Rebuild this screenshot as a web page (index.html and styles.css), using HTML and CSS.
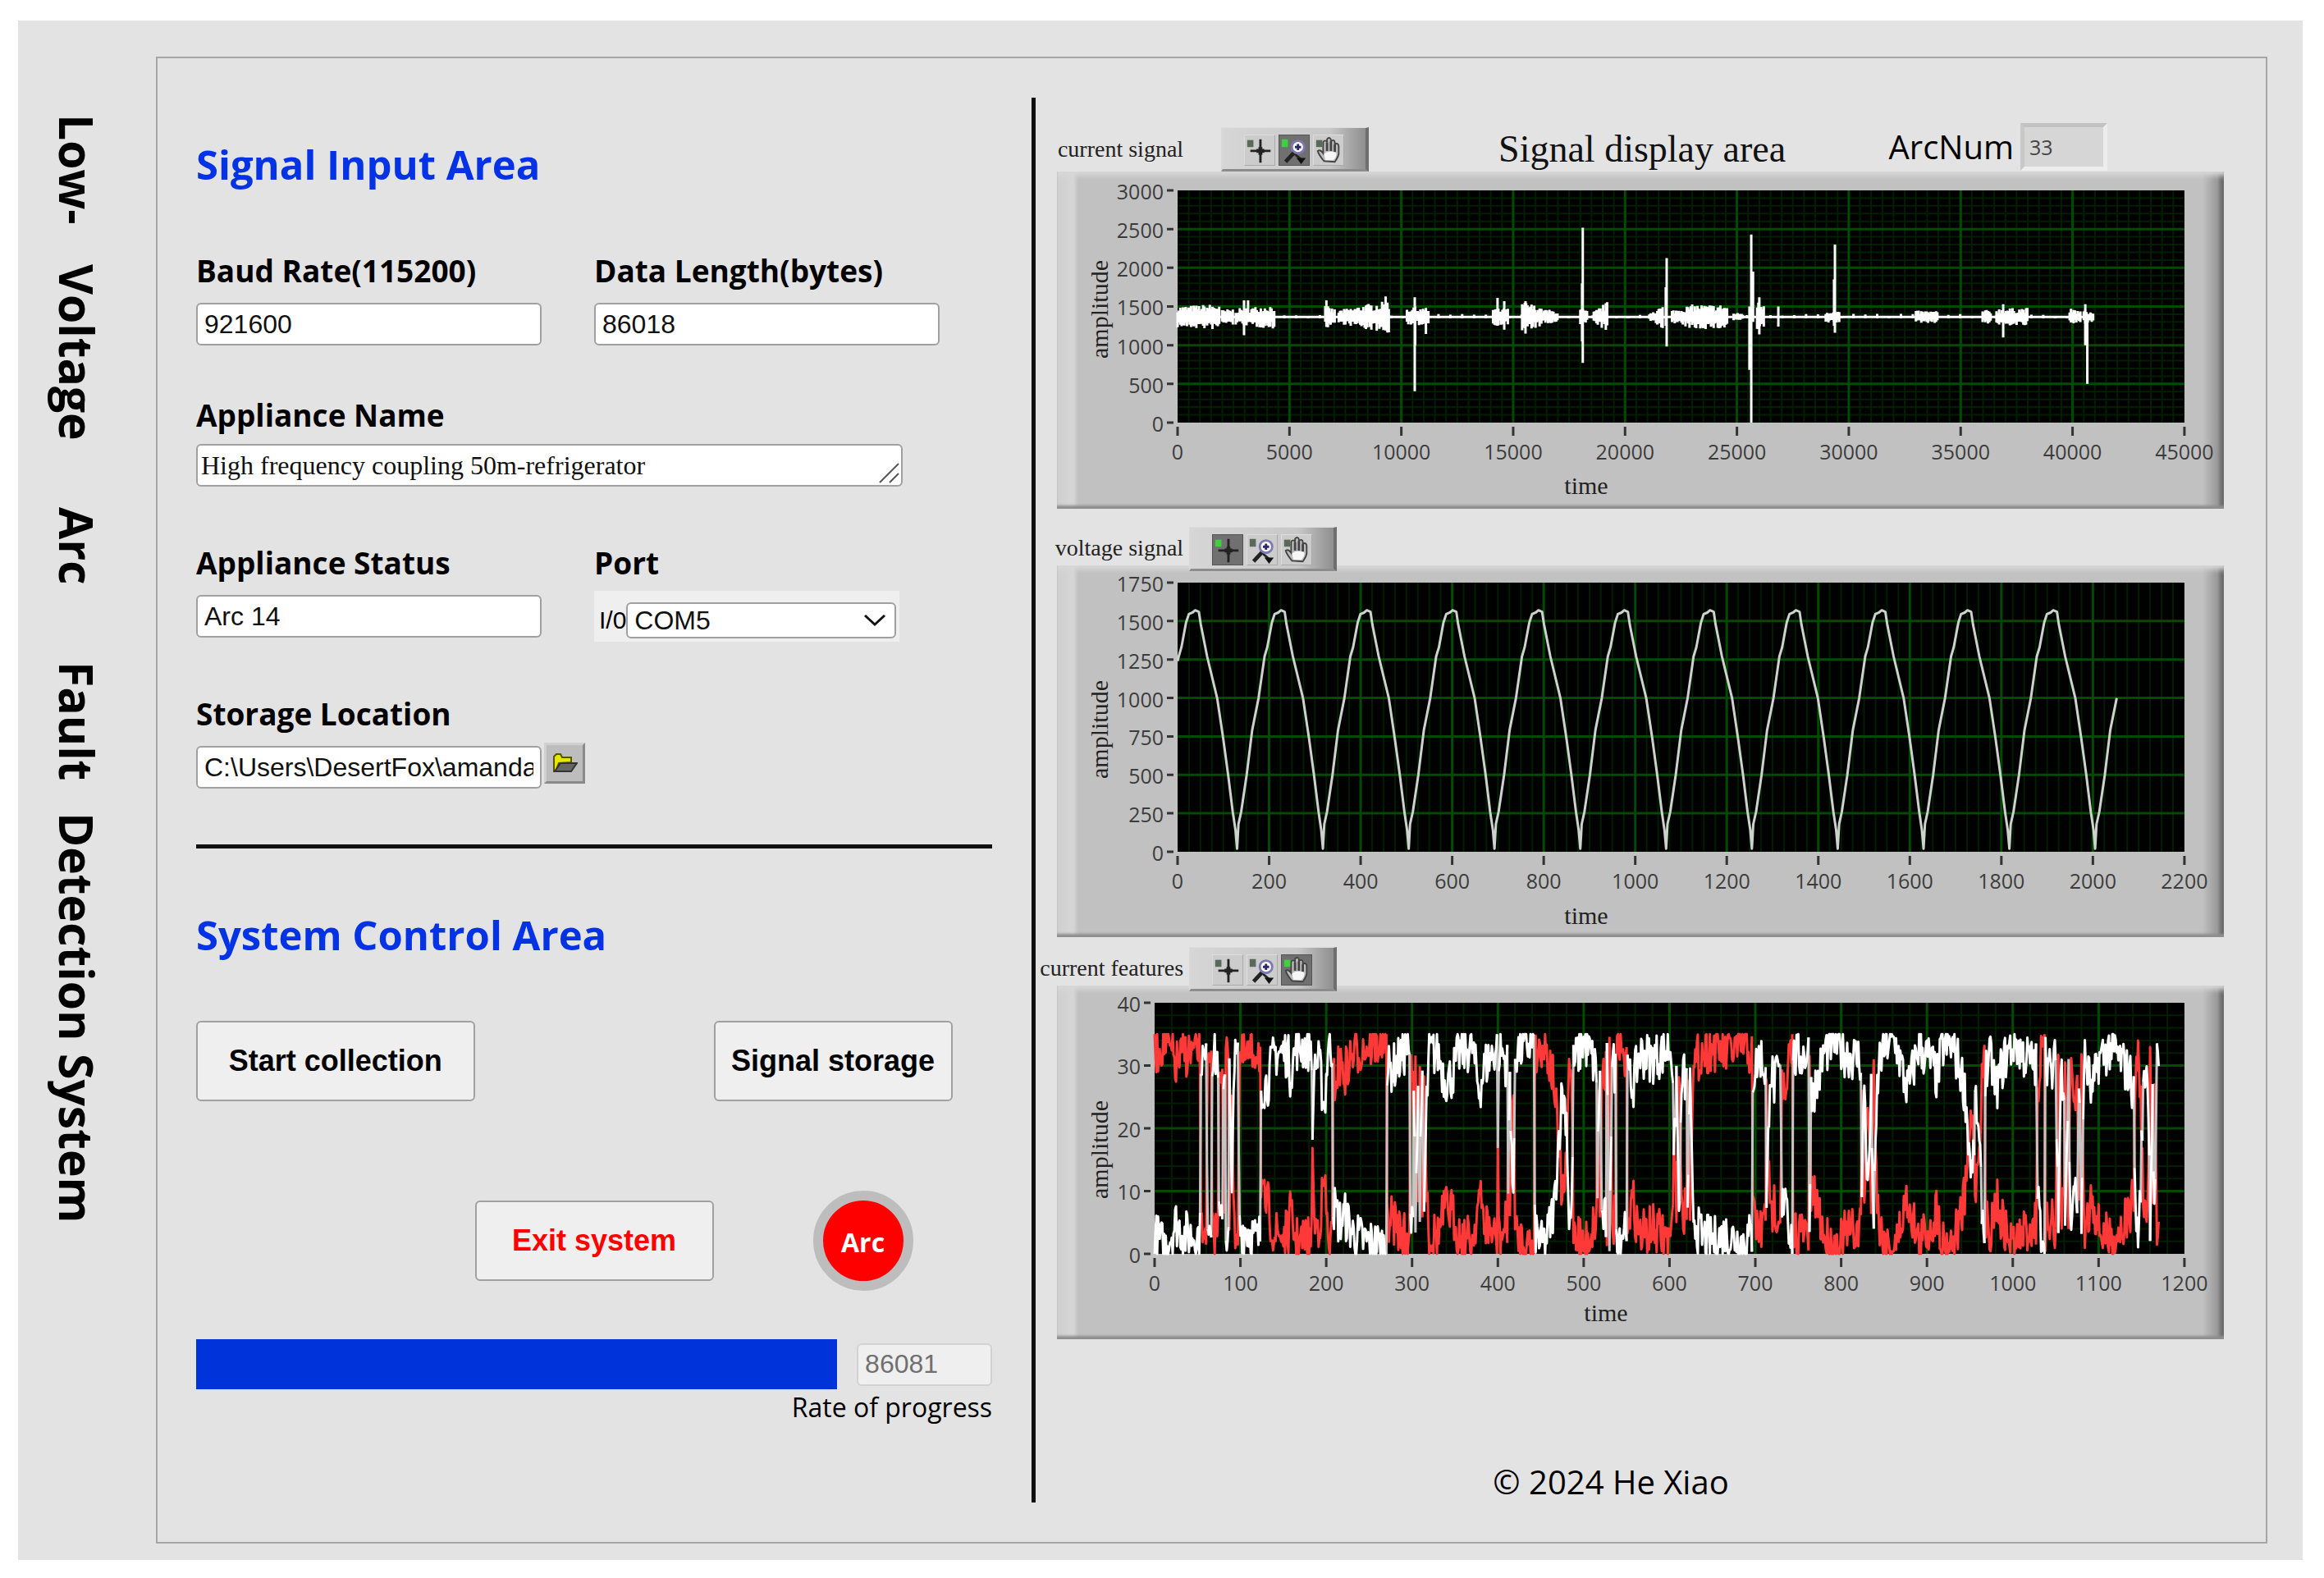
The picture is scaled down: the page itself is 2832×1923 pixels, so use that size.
FILE: index.html
```html
<!DOCTYPE html>
<html lang="en">
<head>
    <meta charset="UTF-8">
    <meta name="viewport" content="width=device-width, initial-scale=1.0">
    <title>Low-Voltage Arc Fault Detection System</title>
    <link rel="stylesheet" href="styles.css">
</head>
<body>
    <!-- Shared toolbar icons -->
    <svg class="sprite" aria-hidden="true">
        <symbol id="icon-cross" viewBox="0 0 38 38">
            <path d="M7 20H33M20 5V35" stroke="#222" stroke-width="3"/>
            <path d="M15 20H25M20 15V25" stroke="#222" stroke-width="5"/>
            <rect class="led" x="3" y="6" width="8" height="9"/>
        </symbol>
        <symbol id="icon-zoom" viewBox="0 0 38 38">
            <path d="M20 21L8 34" stroke="#222" stroke-width="5"/>
            <path d="M20 24L28 31" stroke="#222" stroke-width="3"/>
            <path d="M22 29H34L28 37Z" fill="#111"/>
            <circle cx="24" cy="15" r="8" fill="#fff" stroke="#7d78b0" stroke-width="3"/>
            <path d="M20 15H28M24 11V19" stroke="#2c2a66" stroke-width="3"/>
            <rect class="led" x="3" y="5" width="8" height="10"/>
        </symbol>
        <symbol id="icon-hand" viewBox="0 0 38 38">
            <path d="M13 33C9 28 6 24 5 20C8 18 10 20 12 23V9C13 6 16 6 17 9V5C19 2 22 3 22 6V8C24 5 27 6 27 9V12C29 9 32 11 32 14V24C31 29 29 31 27 34Z" fill="#bdbdbd" stroke="#444" stroke-width="2"/>
            <path d="M17 9V20M22 8V20M27 12V21" stroke="#444" stroke-width="3"/>
            <path d="M13 24C16 20 26 20 29 23C29 28 27 30 25 32H15Z" fill="#f6f6f6"/>
            <rect class="led" x="3" y="6" width="8" height="9"/>
        </symbol>
    </svg>

    <div class="app">
        <h1 class="app-title">
            <span>Low-</span>
            <span>Voltage</span>
            <span>Arc</span>
            <span>Fault</span>
            <span>Detection</span>
            <span>System</span>
        </h1>

        <main class="frame">
            <section class="controls">
                <h2>Signal Input Area</h2>

                <form>
                    <div class="row row-first">
                        <div class="field">
                            <label for="baud">Baud Rate(115200)</label>
                            <input type="text" id="baud" value="921600">
                        </div>
                        <div class="field">
                            <label for="length">Data Length(bytes)</label>
                            <input type="text" id="length" value="86018">
                        </div>
                    </div>

                    <div class="row">
                        <div class="field field-wide">
                            <label for="appliance">Appliance Name</label>
                            <div class="textarea-box">
                                <textarea id="appliance" rows="1">High frequency coupling 50m-refrigerator</textarea>
                                <svg class="grip" viewBox="0 0 28 28"><path d="M2 25L25 2M14 25L25 14" stroke="#555" stroke-width="2"/></svg>
                            </div>
                        </div>
                    </div>

                    <div class="row">
                        <div class="field">
                            <label for="status">Appliance Status</label>
                            <input type="text" id="status" value="Arc 14">
                        </div>
                        <div class="field">
                            <label for="port">Port</label>
                            <div class="port-box">
                                <span>I/0</span>
                                <div class="select-box">
                                    <select id="port">
                                        <option>COM5</option>
                                    </select>
                                    <svg class="chevron" viewBox="0 0 28 16"><path d="M2 2L14 13L26 2" fill="none" stroke="#111" stroke-width="3"/></svg>
                                </div>
                            </div>
                        </div>
                    </div>

                    <div class="row">
                        <div class="field">
                            <label for="storage">Storage Location</label>
                            <input type="text" id="storage" value="C:\Users\DesertFox\amanda\data">
                        </div>
                        <button type="button" class="folder-btn" aria-label="Browse">
                            <svg viewBox="0 0 30 24"><path d="M1 22V4L4 1H9L11 5H22V11L7 12L3 22Z" fill="#e6e600" stroke="#555500" stroke-width="2"/><path d="M2 22L9 12H29L22 22Z" fill="#666" stroke="#333" stroke-width="2"/></svg>
                        </button>
                    </div>
                </form>

                <hr>

                <h2>System Control Area</h2>

                <div class="buttons">
                    <button type="button">Start collection</button>
                    <button type="button" class="col-3">Signal storage</button>
                </div>
                <div class="buttons">
                    <button type="button" class="exit-btn">Exit system</button>
                    <div class="lamp">Arc</div>
                </div>

                <div class="progress-row">
                    <progress id="progress" value="86081" max="86081"></progress>
                    <input type="text" value="86081" aria-label="Bytes received" disabled>
                </div>
                <label class="progress-label" for="progress">Rate of progress</label>
            </section>

            <div class="divider"></div>

            <section class="display">
                <div class="chart-head chart-head-main">
                    <span class="chart-name">current signal</span>
                    <div class="toolbar">
                        <button type="button" aria-label="Cursor"><svg><use href="#icon-cross"/></svg></button>
                        <button type="button" class="active" aria-label="Zoom"><svg><use href="#icon-zoom"/></svg></button>
                        <button type="button" aria-label="Pan"><svg><use href="#icon-hand"/></svg></button>
                    </div>
                    <h2>Signal display area</h2>
                    <label for="arcnum">ArcNum</label>
                    <input type="text" id="arcnum" value="33" readonly>
                </div>
                <svg class="chart" id="chart-current" viewBox="0 0 1422 411"></svg>

                <div class="chart-head chart-head-voltage">
                    <span class="chart-name">voltage signal</span>
                    <div class="toolbar">
                        <button type="button" class="active" aria-label="Cursor"><svg><use href="#icon-cross"/></svg></button>
                        <button type="button" aria-label="Zoom"><svg><use href="#icon-zoom"/></svg></button>
                        <button type="button" aria-label="Pan"><svg><use href="#icon-hand"/></svg></button>
                    </div>
                </div>
                <svg class="chart" id="chart-voltage" viewBox="0 0 1422 453"></svg>

                <div class="chart-head">
                    <span class="chart-name">current features</span>
                    <div class="toolbar">
                        <button type="button" aria-label="Cursor"><svg><use href="#icon-cross"/></svg></button>
                        <button type="button" aria-label="Zoom"><svg><use href="#icon-zoom"/></svg></button>
                        <button type="button" class="active" aria-label="Pan"><svg><use href="#icon-hand"/></svg></button>
                    </div>
                </div>
                <svg class="chart" id="chart-features" viewBox="0 0 1422 431"></svg>

                <footer>&copy; 2024 He Xiao</footer>
            </section>
        </main>
    </div>

    <script src="charts.js"></script>
</body>
</html>
```
FILE: styles.css
```css
* {
    box-sizing: border-box;
}

body {
    margin: 0;
    padding: 25px 26px 22px 22px;
    background-color: #fff;
    color: #000;
    font-family: "Open Sans", "Noto Sans", sans-serif;
}

.sprite {
    display: none;
}

.app {
    display: flex;
    background-color: #e3e3e3;
    padding: 44px 43px 20px 0;
}

/* Vertical title */
.app-title {
    width: 168px;
    height: 1352px;
    margin: 70px 0 0;
    padding-left: 24px;
    display: grid;
    grid-template-columns: 102fr 165fr 105fr 103fr 164fr 109fr;
    writing-mode: vertical-rl;
    align-content: end;
    font-size: 57px;
    line-height: 96px;
    font-weight: bold;
}

.frame {
    flex: 1;
    min-width: 0;
    display: grid;
    grid-template-columns: 67fr 53px 100fr;
    padding: 48px 51px 48px 47px;
    border: 2px solid #a6a6a6;
}

/* Left side */
.controls h2 {
    margin: 73px 0;
    color: #0433e6;
    font-size: 49px;
    line-height: 64px;
    font-weight: bold;
}

.controls h2:first-child {
    margin-top: 49px;
}

.row {
    display: flex;
    margin-bottom: 68px;
}

.row-first {
    margin-bottom: 60px;
}

.field {
    width: 421px;
    margin-right: 64px;
}

.field-wide {
    width: 861px;
}

.field label {
    display: block;
    margin-bottom: 15px;
    font-size: 37px;
    line-height: 49px;
    font-weight: bold;
}

.field-wide label {
    margin-bottom: 11px;
}

input,
textarea,
select {
    display: block;
    width: 100%;
    height: 52px;
    margin: 0;
    padding: 0 8px;
    border: 2px solid #a0a0a0;
    border-radius: 6px;
    background-color: #fff;
    color: #111;
    font-family: "Liberation Sans", Arial, sans-serif;
    font-size: 32px;
}

textarea {
    padding: 5px 4px;
    resize: none;
    overflow: hidden;
    font-family: "Liberation Serif", "Times New Roman", serif;
    line-height: 38px;
}

.textarea-box,
.select-box {
    position: relative;
}

.grip {
    position: absolute;
    right: 2px;
    bottom: 2px;
    width: 28px;
    height: 28px;
}

.port-box {
    display: flex;
    align-items: center;
    width: 372px;
    height: 62px;
    margin: -5px 0;
    padding: 10px 4px 0 6px;
    background-color: #efefef;
    font-family: "Liberation Sans", Arial, sans-serif;
    font-size: 30px;
}

.select-box {
    flex: 1;
}

select {
    height: 44px;
    appearance: none;
}

.chevron {
    position: absolute;
    right: 12px;
    top: 14px;
    width: 28px;
    height: 16px;
}

.folder-btn {
    align-self: flex-end;
    width: 50px;
    height: 50px;
    margin: 0 0 6px -61px;
    padding: 8px;
    border: 3px solid;
    border-color: #d0d0d0 #8a8a8a #8a8a8a #d0d0d0;
    background-color: #bdbdbd;
}

.folder-btn svg {
    display: block;
    width: 30px;
    height: 24px;
}

hr {
    height: 5px;
    margin: 0;
    border: none;
    background-color: #111;
}

.buttons {
    display: grid;
    grid-template-columns: 35% 30% 30%;
    align-items: center;
    margin-bottom: 109px;
}

.buttons + .buttons {
    margin-bottom: 59px;
}

.buttons button {
    height: 98px;
    padding: 0;
    border: 2px solid #a0a0a0;
    border-radius: 6px;
    background-color: #efefef;
    color: #000;
    font-family: "Liberation Sans", Arial, sans-serif;
    font-size: 36px;
    font-weight: bold;
}

.buttons .col-3 {
    grid-column: 3;
}

.buttons .exit-btn {
    grid-column: 2;
    color: #f00;
}

.lamp {
    justify-self: end;
    width: 122px;
    height: 122px;
    margin-right: 48px;
    border: 12px solid #bdbdbd;
    border-radius: 50%;
    background-color: #f00;
    color: #fff;
    font-size: 32px;
    line-height: 102px;
    font-weight: bold;
    text-align: center;
}

.progress-row {
    display: flex;
    align-items: center;
    gap: 24px;
}

progress {
    flex: 1;
    height: 61px;
    appearance: none;
}

progress::-webkit-progress-bar {
    background-color: #efefef;
}

progress::-webkit-progress-value {
    background-color: #0033d9;
}

.progress-row input {
    width: 165px;
    border-color: #d2d2d2;
    background-color: #efefef;
    color: #707070;
}

.progress-label {
    display: block;
    margin-bottom: 94px;
    font-size: 32px;
    line-height: 44px;
    text-align: right;
}

.divider {
    width: 5px;
    margin-left: 48px;
    background-color: #111;
}

/* Right side */
.display {
    display: flex;
    flex-direction: column;
}

.chart-head {
    display: flex;
    align-items: flex-start;
    height: 47px;
    margin-top: 12px;
    position: relative;
    z-index: 1;
}

.chart-head-voltage {
    margin-top: 22px;
}

.chart-head-main {
    height: 61px;
    margin-top: 29px;
    align-items: center;
}

.chart-name {
    width: 180px;
    color: #222;
    font-family: "Liberation Serif", "Times New Roman", serif;
    font-size: 28px;
    line-height: 52px;
    text-align: right;
    white-space: nowrap;
}

.toolbar {
    display: flex;
    gap: 4px;
    width: 180px;
    height: 54px;
    margin-left: 7px;
    padding: 8px 0 0 26px;
    border-style: solid;
    border-width: 1px 4px 3px 2px;
    border-color: #ddd #6e6e6e #8c8c8c #d8d8d8;
    background: linear-gradient(to right, #d6d6d6, #c8c8c8 75%, #8f8f8f);
}

.chart-head-main .toolbar {
    margin: 6px 158px 0 46px;
}

.toolbar button {
    width: 38px;
    height: 38px;
    padding: 0;
    border: 1px solid;
    border-color: #ddd #aaa #aaa #ddd;
    background-color: #ccc;
    --led: #5a6a5a;
}

.toolbar .active {
    border-color: #555;
    background-color: #707070;
    --led: #3ed03e;
}

.toolbar svg {
    display: block;
    width: 36px;
    height: 36px;
}

.led {
    fill: var(--led);
}

.chart-head-main h2 {
    margin: 0 auto 0 0;
    padding-top: 6px;
    color: #111;
    font-family: "Liberation Serif", "Times New Roman", serif;
    font-size: 46px;
    line-height: 60px;
    font-weight: normal;
}

.chart-head-main .chart-name {
    padding-top: 6px;
}

.chart-head-main label {
    font-size: 40px;
    line-height: 60px;
}

.chart-head-main input {
    width: 106px;
    height: 58px;
    margin: 0 142px 0 8px;
    padding: 0 6px;
    border: 5px solid;
    border-color: #c2c2c2 #ededed #ededed #c8c8c8;
    border-radius: 0;
    background-color: #d6d6d6;
    color: #444;
    font-family: "Open Sans", "Noto Sans", sans-serif;
    font-size: 25px;
}

.chart {
    display: block;
    margin-left: 26px;
    background: linear-gradient(to right, #cfcfcf, #d6d6d6 20px, #c1c1c1 26px, #c1c1c1 calc(100% - 26px), #999 calc(100% - 8px), #555);
    box-shadow: inset 0 -5px 3px -1px #8e8e8e, inset 0 8px 6px -3px #d8d8d8;
}

.chart text {
    fill: #3c3c3c;
    font-family: "Open Sans", "Noto Sans", sans-serif;
    font-size: 25px;
}

.chart .axis-title {
    fill: #222;
    font-family: "Liberation Serif", "Times New Roman", serif;
    font-size: 30px;
}

.grid-minor {
    stroke: #001e00;
    stroke-width: 2;
}

.grid-major {
    stroke: #004b00;
    stroke-width: 3;
}

.tick {
    stroke: #333;
    stroke-width: 3;
}

.trace {
    fill: none;
    stroke: #fff;
    stroke-width: 3;
    stroke-linejoin: round;
}

.trace-voltage {
    stroke: #ccd2cc;
}

.trace-red {
    stroke: #ff3838;
}

.trace-jumps {
    stroke: #c9c4c4;
    stroke-width: 3;
}

footer {
    margin: auto 46px 0 0;
    font-size: 40px;
    line-height: 50px;
    text-align: center;
}
```
FILE: charts.js
```js
const SVG_NS = "http://www.w3.org/2000/svg";

// Repeatable noise, so the traces look the same on every load
let seed = 7;
function rnd() {
    seed = (seed * 16807) % 2147483647;
    return seed / 2147483647;
}

function add(parent, tag, attrs, text) {
    const el = document.createElementNS(SVG_NS, tag);
    for (const key in attrs) {
        el.setAttribute(key, attrs[key]);
    }
    if (text !== undefined) {
        el.textContent = text;
    }
    parent.appendChild(el);
    return el;
}

function drawAxes(svg, c) {
    const right = c.left + c.width;
    const bottom = c.top + c.height;
    c.x = v => c.left + v / c.xMax * c.width;
    c.y = v => bottom - v / c.yMax * c.height;

    add(svg, "rect", { x: c.left, y: c.top, width: c.width, height: c.height });

    let minor = "";
    for (let v = c.xMinor; v < c.xMax; v += c.xMinor) {
        minor += `M${c.x(v)} ${c.top}V${bottom}`;
    }
    if (c.yMinor) {
        for (let v = c.yMinor; v < c.yMax; v += c.yMinor) {
            minor += `M${c.left} ${c.y(v)}H${right}`;
        }
    }
    add(svg, "path", { class: "grid-minor", d: minor });

    let major = "";
    let ticks = "";
    for (let v = 0; v <= c.xMax; v += c.xStep) {
        if (v > 0 && v < c.xMax) {
            major += `M${c.x(v)} ${c.top}V${bottom}`;
        }
        ticks += `M${c.x(v)} ${bottom + 5}v11`;
        add(svg, "text", { x: c.x(v), y: bottom + 45, "text-anchor": "middle" }, v);
    }
    for (let v = 0; v <= c.yMax; v += c.yStep) {
        if (v > 0 && v < c.yMax) {
            major += `M${c.left} ${c.y(v)}H${right}`;
        }
        ticks += `M${c.left - 13} ${c.y(v)}h8`;
        add(svg, "text", { x: c.left - 17, y: c.y(v) + 11, "text-anchor": "end" }, v);
    }
    add(svg, "path", { class: "grid-major", d: major });
    add(svg, "path", { class: "tick", d: ticks });

    add(svg, "text", { class: "axis-title", x: c.timeX, y: c.timeY, "text-anchor": "middle" }, "time");
    add(svg, "text", {
        class: "axis-title",
        transform: `translate(62 ${c.ampY}) rotate(-90)`,
        "text-anchor": "middle"
    }, "amplitude");
}

// Current signal: [from, to, height at start, height at end]
const bursts = [
    [0, 1900, 140, 170], [1990, 2520, 90, 110], [2600, 3270, 110, 120], [3300, 4330, 130, 160],
    [6600, 7050, 150, 100], [7200, 8300, 90, 150], [8300, 9450, 160, 210], [10250, 11220, 130, 100],
    [14100, 14780, 110, 110], [15400, 16200, 210, 130], [16200, 17000, 110, 80], [18000, 18350, 120, 80],
    [18600, 19220, 70, 200], [21080, 21700, 60, 150], [22100, 23000, 90, 160], [23000, 24570, 160, 160],
    [24850, 25300, 50, 50], [25900, 26200, 200, 200], [28970, 29600, 80, 80], [33000, 34000, 80, 80],
    [35980, 36350, 90, 90], [36600, 38000, 110, 120], [39870, 40400, 110, 80], [40500, 40950, 90, 60]
];

// Current signal: [time, lowest, highest]
const spikes = [
    [2970, 1130, 1580], [3150, 1300, 1580], [6650, 1240, 1580], [9300, 1190, 1630], [10600, 404, 1620],
    [10620, 1000, 1500], [11100, 1145, 1480], [14300, 1250, 1610], [14600, 1200, 1570], [15550, 1150, 1570],
    [18080, 1050, 1800], [18110, 770, 2518], [21860, 984, 2125], [21820, 1250, 1750], [25560, 680, 1500],
    [25640, 0, 2430], [25720, 1300, 1950], [26000, 1140, 1620], [26850, 1240, 1500], [29340, 1250, 1850],
    [29380, 1160, 2300], [36900, 1100, 1530], [40570, 1000, 1530], [40660, 500, 1400]
];

function drawCurrent() {
    const svg = document.getElementById("chart-current");
    const c = {
        left: 147, top: 23, width: 1227, height: 283, xMax: 45000, yMax: 3000,
        xStep: 5000, yStep: 500, xMinor: 500, yMinor: 100, timeX: 645, timeY: 393, ampY: 168
    };
    drawAxes(svg, c);
    const base = 1366;
    let d = `M${c.x(0)} ${c.y(base)}H${c.x(40950)}`;
    for (const [from, to, h1, h2] of bursts) {
        for (let t = from; t <= to; t += 60) {
            const h = h1 + (h2 - h1) * (t - from) / (to - from);
            d += `M${c.x(t)} ${c.y(base + h * (0.4 + rnd() * 0.6))}V${c.y(base - h * (0.4 + rnd() * 0.6))}`;
        }
    }
    for (let t = 0; t < 40900; t += 530) {
        d += `M${c.x(t)} ${c.y(base + 40 * rnd())}V${c.y(base - 20)}`;
    }
    for (const [t, low, high] of spikes) {
        d += `M${c.x(t)} ${c.y(high)}V${c.y(low)}`;
    }
    add(svg, "path", { class: "trace", d: d });
}

// One half wave, measured from its lowest point
const wave = [
    [0, 20], [3, 180], [9, 260], [21, 500], [33, 790], [47, 1000], [60, 1270], [66, 1330], [76, 1490],
    [82, 1545], [90, 1555], [96, 1570], [104, 1560], [108, 1480], [122, 1270], [144, 1000], [157, 740],
    [168, 500], [178, 260], [184, 140]
];

function drawVoltage() {
    const svg = document.getElementById("chart-voltage");
    const c = {
        left: 147, top: 21, width: 1227, height: 328, xMax: 2200, yMax: 1750,
        xStep: 200, yStep: 250, xMinor: 25, yMinor: 0, timeX: 645, timeY: 437, ampY: 200
    };
    drawAxes(svg, c);
    const points = [`${c.x(0)},${c.y(1240)}`];
    for (let n = 0; n < 12; n++) {
        for (const [dx, v] of wave) {
            const t = -57.5 + n * 187.5 + dx;
            if (t > 0 && t <= 2052) {
                points.push(`${c.x(t).toFixed(1)},${c.y(v).toFixed(1)}`);
            }
        }
    }
    add(svg, "polyline", { class: "trace trace-voltage", points: points.join(" ") });
}

// White feature: [time, mean]; the red one mirrors it around 17.5
const features = [
    [0, 3], [12, 1], [25, 5], [35, 3], [50, 3], [53, 3], [54, 32], [60, 30], [62, 6], [66, 5], [67, 32], [74, 31], [75, 5],
    [79, 4], [80, 29], [82, 29], [83, 4], [86, 2], [87, 30], [90, 7], [92, 30], [97, 31], [99, 4], [108, 4], [120, 2],
    [123, 3], [124, 27], [131, 27], [140, 32], [155, 32], [158, 29], [165, 33], [183, 33], [184, 15], [186, 31],
    [192, 30], [198, 23], [202, 33], [207, 33], [208, 8], [215, 5], [222, 6], [232, 3], [245, 2], [270, 1], [271, 29],
    [280, 30], [295, 33], [297, 30], [298, 5], [301, 4], [302, 30], [304, 7], [307, 25], [309, 9], [312, 27], [314, 6],
    [317, 24], [320, 32], [330, 32], [338, 28], [345, 28], [355, 32], [370, 33], [378, 26], [385, 30], [399, 33],
    [400, 20], [402, 33], [411, 30], [412, 10], [414, 29], [418, 6], [420, 32], [430, 33], [442, 34], [443, 4],
    [452, 1], [458, 3], [466, 8], [470, 17], [475, 26], [480, 22], [483, 5], [486, 6], [488, 30], [500, 34], [507, 32],
    [515, 29], [516, 10], [519, 31], [521, 6], [526, 5], [527, 31], [530, 3], [533, 31], [537, 29], [538, 4], [544, 3],
    [550, 6], [551, 28], [558, 27], [565, 32], [580, 31], [602, 33], [604, 29], [605, 12], [608, 29], [611, 6],
    [615, 29], [620, 27], [621, 8], [624, 26], [627, 7], [635, 3], [650, 2], [665, 3], [685, 2], [696, 3], [697, 28],
    [705, 32], [712, 29], [713, 6], [717, 30], [722, 27], [729, 29], [731, 6], [735, 12], [739, 5], [743, 2],
    [744, 31], [760, 32], [762, 32], [763, 4], [765, 26], [772, 27], [780, 32], [790, 34], [805, 32], [823, 31],
    [824, 8], [827, 28], [831, 9], [835, 25], [838, 4], [842, 26], [845, 31], [855, 34], [865, 33], [873, 28],
    [878, 26], [890, 33], [903, 31], [912, 28], [918, 33], [930, 33], [940, 29], [945, 25], [949, 17], [953, 12],
    [957, 25], [961, 16], [965, 6], [967, 2], [968, 29], [975, 31], [980, 26], [990, 31], [1003, 34], [1010, 32],
    [1027, 30], [1029, 10], [1032, 4], [1037, 3], [1038, 32], [1045, 28], [1050, 31], [1053, 4], [1056, 29],
    [1060, 28], [1061, 6], [1065, 29], [1067, 4], [1072, 12], [1075, 4], [1077, 30], [1080, 4], [1083, 31],
    [1088, 29], [1092, 25], [1100, 31], [1115, 33], [1125, 31], [1138, 28], [1141, 25], [1143, 6], [1147, 3],
    [1149, 12], [1153, 29], [1157, 30], [1160, 6], [1163, 27], [1165, 5], [1168, 30], [1170, 28]
];

function drawFeatures() {
    const svg = document.getElementById("chart-features");
    const c = {
        left: 119, top: 21, width: 1255, height: 306, xMax: 1200, yMax: 40,
        xStep: 100, yStep: 10, xMinor: 20, yMinor: 2, timeX: 669, timeY: 409, ampY: 200
    };
    drawAxes(svg, c);
    let white = "";
    let red = "";
    let jumps = "";
    let last = null;
    let k = 0;
    for (let t = 0; t <= 1170; t += 1) {
        while (features[k + 1][0] < t) {
            k++;
        }
        const [t1, v1] = features[k];
        const [t2, v2] = features[k + 1];
        let v = v1 + (v2 - v1) * (t - t1) / (t2 - t1) + (rnd() - 0.5) * 8;
        v = Math.max(0, Math.min(35, v));
        const x = c.x(t).toFixed(1);
        // A jump between the two levels is a fainter line than the levels themselves
        const jump = last !== null && Math.abs(v - last) > 9;
        if (jump) {
            jumps += `M${c.x(t - 1).toFixed(1)} ${c.y(last).toFixed(1)}L${x} ${c.y(v).toFixed(1)}`;
            red += `M${c.x(t - 1).toFixed(1)} ${c.y(35 - last).toFixed(1)}`;
        }
        const command = last === null || jump ? "M" : "L";
        white += `${command}${x} ${c.y(v).toFixed(1)}`;
        red += `${last === null ? "M" : "L"}${x} ${c.y(35 - v).toFixed(1)}`;
        last = v;
    }
    add(svg, "path", { class: "trace trace-red", d: red });
    add(svg, "path", { class: "trace trace-jumps", d: jumps });
    add(svg, "path", { class: "trace", d: white });
}

drawCurrent();
drawVoltage();
drawFeatures();
```
